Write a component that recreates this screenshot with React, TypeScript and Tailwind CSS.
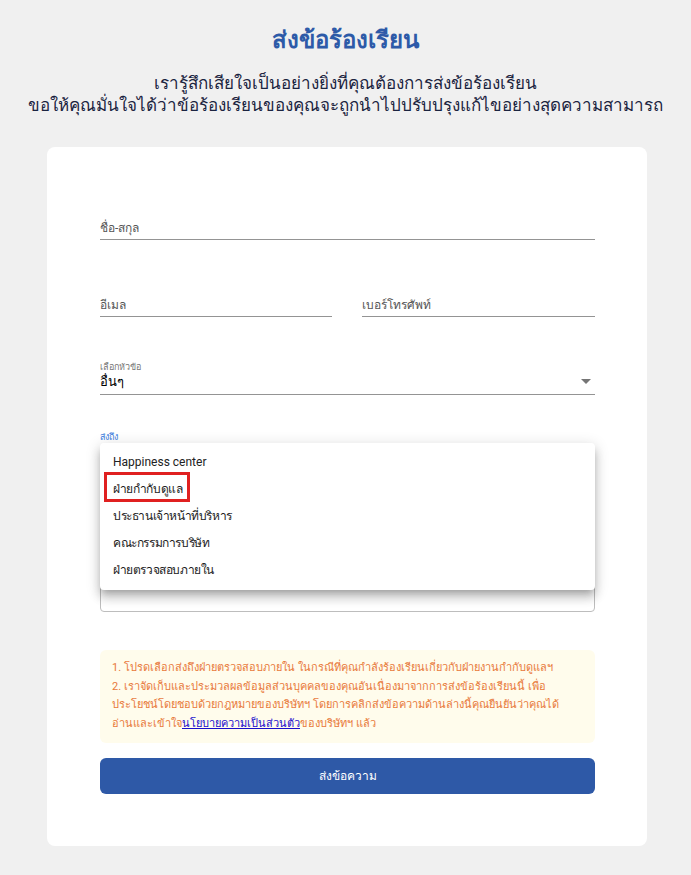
import React from "react";

const font = { fontFamily: "Roboto, 'Noto Sans', 'Liberation Sans', sans-serif" };

export default function App() {
  const items = [
    "Happiness center",
    "ฝ่ายกำกับดูแล",
    "ประธานเจ้าหน้าที่บริหาร",
    "คณะกรรมการบริษัท",
    "ฝ่ายตรวจสอบภายใน",
  ];
  return (
    <div className="min-h-[875px] w-full bg-[#f0f0f0] pt-[23px]" style={font}>
      <h1 className="text-center text-[24px] font-bold leading-[34px] text-[#2d5aa8]">
        ส่งข้อร้องเรียน
      </h1>
      <div className="mt-[15px] text-center text-[17px] leading-[22px] text-[#1b2440]">
        <p>เรารู้สึกเสียใจเป็นอย่างยิ่งที่คุณต้องการส่งข้อร้องเรียน</p>
        <p>ขอให้คุณมั่นใจได้ว่าข้อร้องเรียนของคุณจะถูกนำไปปรับปรุงแก้ไขอย่างสุดความสามารถ</p>
      </div>

      <div className="relative ml-[47px] mt-[31px] w-[600px] rounded-[8px] bg-white pl-[53px] pr-[52px] pt-[71px] pb-[52px]">
        {/* name */}
        <div className="border-b border-[#949494] pb-[1px] text-[12px] leading-[20px] text-[#555]">
          ชื่อ-สกุล
        </div>
        {/* email/phone */}
        <div className="mt-[55px] flex gap-[30px]">
          <div className="w-[232px] border-b border-[#949494] pb-[1px] text-[12px] leading-[20px] text-[#555]">
            อีเมล
          </div>
          <div className="flex-1 border-b border-[#949494] pb-[1px] text-[12px] leading-[20px] text-[#555]">
            เบอร์โทรศัพท์
          </div>
        </div>
        {/* select */}
        <div className="mt-[45px] border-b border-[#949494] pb-[2px]">
          <div className="text-[9px] leading-[10px] text-[#777]">เลือกหัวข้อ</div>
          <div className="flex items-center justify-between">
            <span className="text-[13px] font-medium leading-[20px] text-black">อื่นๆ</span>
            <svg width="10" height="6" viewBox="0 0 10 6" className="mr-[4px]">
              <path d="M0 0 L10 0 L5 5 Z" fill="#757575" />
            </svg>
          </div>
        </div>
        {/* send to */}
        <div className="mt-[37px]">
          <div className="text-[9px] leading-[10px] text-[#3b7ddd]">ส่งถึง</div>
          <div className="h-[24px] border-b border-[#3b7ddd]" />
        </div>
        <div className="mt-[40px] h-[106px] rounded-[4px] border border-[#bdbdbd]" />

        {/* notice */}
        <div className="mt-[38px] rounded-[6px] bg-[#fffcec] px-[12px] py-[9px] text-[11px] leading-[18.7px] text-[#e8793a]">
          <p>1. โปรดเลือกส่งถึงฝ่ายตรวจสอบภายใน ในกรณีที่คุณกำลังร้องเรียนเกี่ยวกับฝ่ายงานกำกับดูแลฯ</p>
          <p>
            2. เราจัดเก็บและประมวลผลข้อมูลส่วนบุคคลของคุณอันเนื่องมาจากการส่งข้อร้องเรียนนี้ เพื่อ
            <br />
            ประโยชน์โดยชอบด้วยกฎหมายของบริษัทฯ โดยการคลิกส่งข้อความด้านล่างนี้คุณยืนยันว่าคุณได้
            <br />
            อ่านและเข้าใจ
            <span className="text-[#1a0dcc] underline">นโยบายความเป็นส่วนตัว</span>ของบริษัทฯ แล้ว
          </p>
        </div>

        <button className="mt-[15px] flex h-[36px] w-full items-center justify-center rounded-[6px] bg-[#2e59a7] text-[12px] text-white">
          ส่งข้อความ
        </button>

        {/* dropdown menu overlay */}
        <div className="absolute left-[53px] top-[296px] w-[495px] rounded-[4px] bg-white pt-[5px] pb-[7px] shadow-[0_5px_6px_-3px_rgba(0,0,0,0.2),0_8px_10px_1px_rgba(0,0,0,0.14),0_3px_14px_2px_rgba(0,0,0,0.12)]">
          {items.map((t, i) => (
            <div
              key={t}
              className={
                i === 0
                  ? "flex h-[27px] items-center pl-[13px] text-[12px] text-[#222]"
                  : "flex h-[27px] items-center pl-[13px] text-[12px] tracking-[-0.4px] text-[#222]"
              }
            >
              {t}
            </div>
          ))}
          <div className="absolute left-[4px] top-[29px] h-[30px] w-[86px] border-[3px] border-[#e02020]" />
        </div>
      </div>
    </div>
  );
}
